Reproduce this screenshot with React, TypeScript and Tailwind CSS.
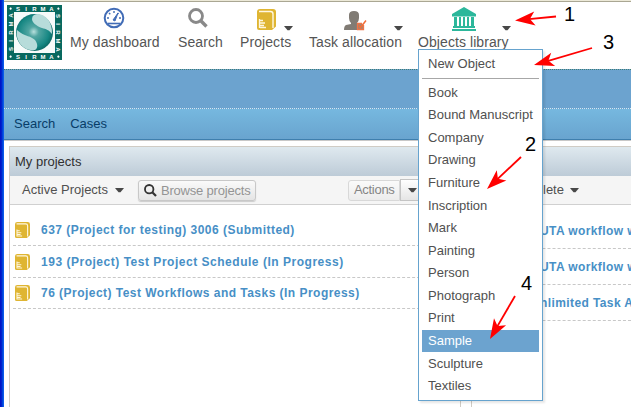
import React from 'react';

const items = ['Book', 'Bound Manuscript', 'Company', 'Drawing', 'Furniture', 'Inscription', 'Mark', 'Painting', 'Person', 'Photograph', 'Print', 'Sample', 'Sculpture', 'Textiles'];

const projects = [
  { name: '637 (Project for testing) 3006 (Submitted)', cls: 'h-8 tracking-[0.47px]' },
  { name: '193 (Project) Test Project Schedule (In Progress)', cls: 'h-8 tracking-[0.52px]' },
  { name: '76 (Project) Test Workflows and Tasks (In Progress)', cls: 'h-[31px] tracking-[0.47px]' },
];

function Caret({ className = '' }: { className?: string }) {
  return (
    <svg className={`shrink-0 ${className}`} width="9" height="5" viewBox="0 0 9 5">
      <path d="M0 0h9L5.500 4.200h-2z" fill="#484848" />
    </svg>
  );
}

function Book({ className = '', w, h }: { className?: string; w: number; h: number }) {
  return (
    <svg className={`shrink-0 ${className}`} width={w} height={h} viewBox="0 0 19 21" preserveAspectRatio="none">
      <path d="M0 3Q0 0 3 0h13q3 0 3 3v14.500l-4 3.500H2q-2 0-2-2z" fill="#dfb532" />
      <path d="M2 2.500h11.500Q16 2.500 16 5v14" fill="none" stroke="#fff8e2" strokeWidth="1.400" />
      <path d="M2.500 10v9M3 11.500h3M3 14h5M3 16.500h4M3 18.500h6" stroke="#fff7de" strokeWidth="1.300" />
    </svg>
  );
}

function Glass({ className = '', size, color }: { className?: string; size: number; color: string }) {
  return (
    <svg className={`shrink-0 ${className}`} width={size} height={size} viewBox="0 0 20 20" fill="none" stroke={color}>
      <circle cx="8" cy="8" r="6.500" strokeWidth="2.800" />
      <path d="M12.800 12.800 18.500 18.500" strokeWidth="3.400" />
    </svg>
  );
}

function Logo() {
  return (
    <svg width="55" height="55" viewBox="0 0 55 55" className="shrink-0">
      <defs>
        <radialGradient id="globe" cx=".48" cy=".48" r=".55">
          <stop offset="0" stopColor="#b8e0dd" />
          <stop offset=".25" stopColor="#52a6a2" />
          <stop offset=".75" stopColor="#168783" />
          <stop offset="1" stopColor="#08635f" />
        </radialGradient>
      </defs>
      <rect width="55" height="55" fill="#08695f" />
      <rect x="7" y="7" width="41" height="41" fill="#f7fbfa" />
      <circle cx="27.500" cy="27.500" r="18.500" fill="url(#globe)" />
      <path d="M27 10C35 6 46 15 45 29C42 25 39 24 35 23C29 21 25 17 25 14Q25 11 27 10Z" fill="#b7dcda" />
      <path d="M10 25C8 36 17 47 28 45C31 43 31 39 28 35C24 31 18 31 14 28Q11 26 10 25Z" fill="#b7dcda" />
      <g fill="#fff" fontFamily="Liberation Sans, sans-serif" fontWeight="700" fontSize="6" textAnchor="middle">
        {['translate(0 0)', 'translate(0 48)', 'rotate(90 27.500 27.500)', 'rotate(270 27.500 27.500)'].map((t) => (
          <g key={t} transform={t}>
            <text x="11" y="5.700">S</text><text x="19" y="5.700">I</text><text x="27.500" y="5.700">R</text><text x="36" y="5.700">M</text><text x="44.500" y="5.700">A</text>
            <circle cx="3.500" cy="3.700" r=".9" /><circle cx="51.500" cy="3.700" r=".9" />
          </g>
        ))}
      </g>
    </svg>
  );
}

function Dashboard() {
  return (
    <svg width="22" height="22" viewBox="0 0 22 22" fill="none" stroke="#416cb6">
      <circle cx="11" cy="11" r="9.300" strokeWidth="2" />
      <path d="M5 16.500h12" strokeWidth="1.600" />
      <path d="M11 4v2M6 6l1.300 1.300M4 11h2M16 11h2M15.500 6l-1 1" strokeWidth="1.400" />
      <path d="m10 13 5-7-3 8z" fill="#416cb6" strokeWidth="1" />
    </svg>
  );
}

function Person() {
  return (
    <svg width="23" height="20" viewBox="0 0 23 20">
      <path d="M5 4q0-4 5-4t5 4v3q0 3-2 5v1l5 2q2 1 2 4H0q0-4 2-5l5-1v-1Q5 10 5 7z" fill="#807b74" />
      <path d="M19.500 14v4.500h-6v-6H18" fill="#a6836f" stroke="#ef7447" strokeWidth="1.300" />
      <path d="m15 14.500 1.500 2 5.500-7" fill="none" stroke="#f36d38" strokeWidth="1.500" />
    </svg>
  );
}

function Bank() {
  return (
    <svg width="24" height="24" viewBox="0 0 24 24" fill="#2cb79b">
      <path d="M12 0 24 7v2.500H0V7zM2 10h3v9H2zM7 10h2v9H7zM11 10h2v9h-2zM15 10h2v9h-2zM19 10h3v9h-3zM1 19h22v2H1zM0 22h24v2H0z" />
    </svg>
  );
}

function NavItem({ label, icon, className, iconClass, caret }: { label: string; icon: React.ReactNode; className: string; iconClass: string; caret?: string }) {
  return (
    <div className={`shrink-0 whitespace-nowrap text-[14px] leading-4 tracking-[0.08px] text-[#555] ${className}`}>
      <div className={`flex h-[32px] items-start ${iconClass}`}>
        {icon}
        {caret && <Caret className={caret} />}
      </div>
      <div>{label}</div>
    </div>
  );
}

const arrows = [
  { x1: 556, y1: 16.500, x2: 515, y2: 20.500 },
  { x1: 592, y1: 48, x2: 534, y2: 65 },
  { x1: 521, y1: 157, x2: 487, y2: 189 },
  { x1: 515, y1: 296, x2: 490, y2: 339 },
];

export default function App() {
  return (
    <div className="relative flex h-[407px] w-[631px] overflow-hidden bg-white font-['Liberation_Sans',Arial,sans-serif] text-[13px] text-[#505050]">
      <div className="w-1 shrink-0 bg-linear-to-r from-[#0015c8] from-30% to-[#1666f0]" />
      <div className="flex min-w-0 flex-1 flex-col">
        <div className="h-0.5 shrink-0 border-b border-[#aaa793] bg-[#ece9d8]" />
        <header className="flex h-[67px] shrink-0 items-start pl-[3px]">
          <div className="pt-[3px]"><Logo /></div>
          <NavItem label="My dashboard" icon={<Dashboard />} className="ml-2 w-[108px]" iconClass="pl-[33px] pt-[5px]" />
          <NavItem label="Search" icon={<Glass size={20} color="#898989" />} className="w-[62px]" iconClass="pl-[10px] pt-[6px]" />
          <NavItem label="Projects" icon={<Book w={19} h={21} />} className="w-[69px]" iconClass="pl-[17px] pt-[7px]" caret="ml-2 mt-[17px]" />
          <NavItem label="Task allocation" icon={<Person />} className="w-[109px]" iconClass="pl-[35px] pt-[9px]" caret="ml-[27px] mt-[15px]" />
          <NavItem label="Objects library" icon={<Bank />} className="w-[100px]" iconClass="pl-[34px] pt-[5px]" caret="ml-[26px] mt-[19px]" />
        </header>
        <div className="h-10 shrink-0 border-y border-dotted border-t-[#3f7c75] border-b-[#d5e7f3] bg-[#6ca3cf]" />
        <nav className="flex h-[31px] shrink-0 items-center gap-[15px] border-b border-[#3f7fae] bg-linear-to-b from-[#76b8df] to-[#69a4cf] pl-[10px] text-[#083d68]">
          <span>Search</span><span>Cases</span>
        </nav>
        <main className="flex min-h-0 flex-1 gap-[10px] border-t border-[#c8c8c8] pl-[5px] pt-[5px]">
          <section className="w-[452px] shrink-0 border-x border-t border-[#d0ccc5]">
            <div className="flex h-[29px] items-center bg-linear-to-b from-[#dfe9ef] to-[#bdcbd7] pl-[5px] text-[#303030]">My projects</div>
            <div className="flex h-[29px] items-center border-b border-[#d0d0d0] bg-[#f5f5f5] pl-3">
              <span>Active Projects</span><Caret className="ml-[7px]" />
              <button className="ml-[14px] mt-px flex h-[21px] w-[118px] items-center whitespace-nowrap rounded-[3px] border border-[#c8c8c8] bg-linear-to-b from-[#fafafa] to-[#e5e5e5] pl-[5px] text-[#949494] shadow-[0_1px_1px_#ccc]">
                <Glass size={13} color="#333" /><span className="ml-1 mt-px tracking-[-0.2px]">Browse projects</span>
              </button>
              <button className="ml-[92px] flex h-[21px] w-[52px] shrink-0 items-center rounded-l-[3px] border border-[#d8d8d8] bg-linear-to-b from-[#fafafa] to-[#ececec] pl-[5px] tracking-[-0.3px] text-[#858585]">Actions</button>
              <button className="flex h-[22px] w-6 items-center border border-[#c4c4c4] bg-linear-to-b from-white to-[#e5e5e5] pl-[7px]"><Caret /></button>
            </div>
            <div className="pl-[3px] pt-[9px]">
              {projects.map((p) => (
                <div key={p.name} className={`flex items-center whitespace-nowrap border-b border-dashed border-[#c8c8c8] pl-[2px] font-bold text-[#478fc6] ${p.cls}`}>
                  <Book w={15} h={16} /><span className="ml-[11px] text-[12px]">{p.name}</span>
                </div>
              ))}
            </div>
          </section>
          <section className="min-w-0 flex-1 border-l border-t border-[#d0ccc5]">
            <div className="h-[29px] bg-linear-to-b from-[#dfe9ef] to-[#bdcbd7]" />
            <div className="flex h-[29px] items-center border-b border-[#d0d0d0] bg-[#f5f5f5] pl-[71px]">lete<Caret className="ml-[6px]" /></div>
            <div className="pt-2 text-[12px] font-bold tracking-[0.4px] text-[#478fc6]">
              {['UTA workflow w', 'UTA workflow w', 'nlimited Task A'].map((t, i) => (
                <div key={i} className="flex h-9 items-center whitespace-nowrap border-b border-dashed border-[#c8c8c8] pl-[68px]">{t}</div>
              ))}
            </div>
          </section>
        </main>
      </div>

      <div className="absolute left-[418px] top-[49px] h-[352px] w-[125px] border border-[#66a3ce] bg-white px-[3px] shadow-[2px_2px_2px_rgba(0,0,0,0.1)]">
        <div className="flex h-[29px] items-center border-b border-[#a7a7a7] pl-[6px]">New Object</div>
        <ul className="pt-[2px]">
          {items.map((item) => (
            <li key={item} className={`flex h-[22.600px] items-center whitespace-nowrap pl-[6px] ${item === 'Sample' ? 'bg-[#6ca3cf] text-white' : ''}`}>{item}</li>
          ))}
        </ul>
      </div>

      <svg className="pointer-events-none absolute inset-0" width="631" height="407">
        {arrows.map((a) => (
          <g key={a.y1} transform={`translate(${a.x2} ${a.y2}) rotate(${(Math.atan2(a.y1 - a.y2, a.x1 - a.x2) * 180) / Math.PI})`}>
            <path d={`M14 0H${Math.hypot(a.x1 - a.x2, a.y1 - a.y2)}`} stroke="#f00" strokeWidth="1.800" />
            <path d="M0 0 20-7 15 0 20 7Z" fill="#f00" />
          </g>
        ))}
      </svg>
      <span className="absolute left-[564px] top-[4px] text-[20px] leading-5 text-black">1</span>
      <span className="absolute left-[603px] top-[32px] text-[20px] leading-5 text-black">3</span>
      <span className="absolute left-[525px] top-[134px] text-[20px] leading-5 text-black">2</span>
      <span className="absolute left-[521px] top-[273px] text-[20px] leading-5 text-black">4</span>
    </div>
  );
}
